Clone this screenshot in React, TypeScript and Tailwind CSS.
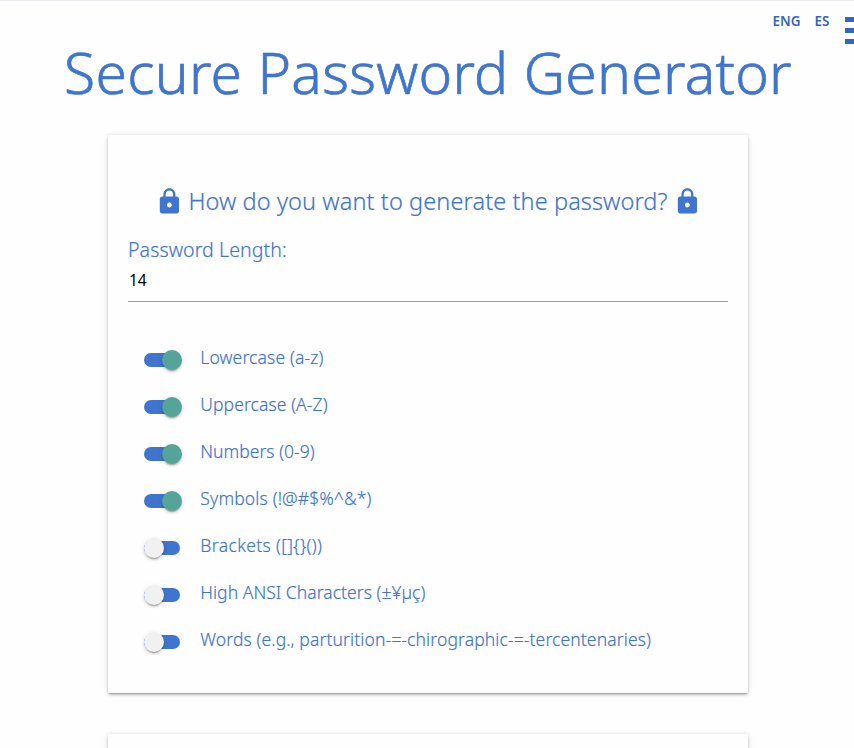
import { MdLock } from "react-icons/md";

type Option = { label: string; on: boolean; tracking: string };

const options: Option[] = [
  { label: "Lowercase (a-z)", on: true, tracking: "tracking-[0.14px]" },
  { label: "Uppercase (A-Z)", on: true, tracking: "tracking-[0.09px]" },
  { label: "Numbers (0-9)", on: true, tracking: "tracking-[0.03px]" },
  { label: "Symbols (!@#$%^&*)", on: true, tracking: "tracking-[0.16px]" },
  { label: "Brackets ([]{}())", on: false, tracking: "tracking-[0.38px]" },
  { label: "High ANSI Characters (±¥µç)", on: false, tracking: "tracking-[0.04px]" },
  { label: "Words (e.g., parturition-=-chirographic-=-tercentenaries)", on: false, tracking: "tracking-[0.115px]" },
];

const cardShadow =
  "shadow-[0_2px_2px_0_rgba(0,0,0,0.14),0_3px_1px_-2px_rgba(0,0,0,0.12),0_1px_5px_0_rgba(0,0,0,0.2)]";

function Switch({ on }: { on: boolean }) {
  return (
    <span className="mt-[5px] flex h-5 w-[38px] shrink-0 items-center">
      <span className="flex h-[14px] w-9 items-center rounded-full bg-[#3f75cf]">
        <span
          className={
            on
              ? "ml-[18px] size-5 shrink-0 rounded-full bg-[#55a49a] shadow-[0_3px_1px_-2px_rgba(0,0,0,0.2),0_2px_2px_0_rgba(0,0,0,0.14),0_1px_5px_0_rgba(0,0,0,0.12)]"
              : "size-5 shrink-0 rounded-full bg-[#f1f1f1] shadow-[0_3px_1px_-2px_rgba(0,0,0,0.2),0_2px_2px_0_rgba(0,0,0,0.14),0_1px_5px_0_rgba(0,0,0,0.12)]"
          }
        />
      </span>
    </span>
  );
}

function OptionRow({ label, on, tracking }: Option) {
  return (
    <label className="flex h-[47px] items-center pl-4">
      <Switch on={on} />
      <span className={`mb-0.5 ml-[18.3px] whitespace-nowrap text-[17.5px] leading-6 ${tracking}`}>{label}</span>
    </label>
  );
}

export default function App() {
  return (
    <div className="h-[748px] overflow-hidden bg-[#fefefe] font-['Noto_Sans','Open_Sans',sans-serif] font-light text-[#3f75cf] [-webkit-text-stroke:0.2px_currentColor]">
      <header className="flex h-10 items-start justify-end border-t border-[#ebebef] text-[#3566bf]">
        <nav className="mt-[9px] flex h-[22px] gap-[14px] text-[13.5px] font-semibold leading-[22px] [-webkit-text-stroke:0]">
          <a>ENG</a>
          <a>ES</a>
        </nav>
        <div className="ml-[15.5px] mt-4 flex w-[9px] flex-col gap-1.5">
          <span className="h-[5px] bg-[#3566bf]" />
          <span className="h-[5px] bg-[#3566bf]" />
          <span className="h-[5px] bg-[#3566bf]" />
        </div>
      </header>
      <h1 className="whitespace-nowrap pl-0.5 text-center text-[57px] leading-[64px] tracking-[0.3px] [-webkit-text-stroke:0.7px_currentColor]">
        Secure Password Generator
      </h1>
      <main className="ml-[108px] mt-[31px] w-[640px]">
        <section className={`h-[558px] rounded-[2px] bg-[#fefefe] px-5 pt-[50px] ${cardShadow}`}>
          <h2 className="flex h-8 items-center justify-center gap-[5px] whitespace-nowrap text-[23.5px] leading-8 tracking-[0.1px]">
            <MdLock className="size-[28.8px] shrink-0 [stroke-width:0]" />
            <span>How do you want to generate the password?</span>
            <MdLock className="size-[28.8px] shrink-0 [stroke-width:0]" />
          </h2>
          <div className="pt-[21px] text-[19.5px] leading-6 tracking-[0.1px]">Password Length:</div>
          <div className="h-10 border-b border-[#9e9e9e] pl-px text-[15.5px] font-normal leading-[36px] text-black [-webkit-text-stroke:0]">
            14
          </div>
          <div className="mt-8">
            {options.map((o) => (
              <OptionRow key={o.label} {...o} />
            ))}
          </div>
        </section>
        <section className={`mt-[41px] h-40 rounded-[2px] bg-[#fefefe] ${cardShadow}`} />
      </main>
    </div>
  );
}
